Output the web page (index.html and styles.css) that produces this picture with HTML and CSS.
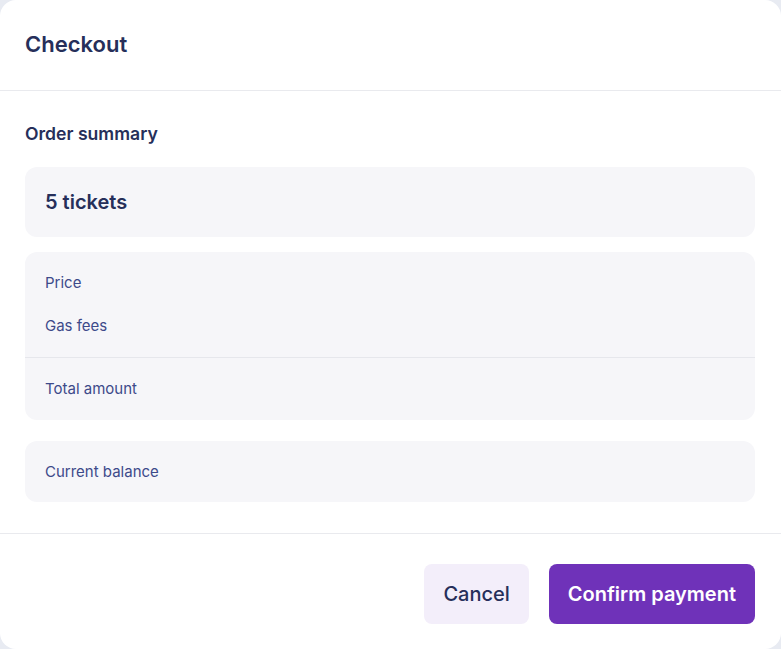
FILE: index.html
```html
<!DOCTYPE html>
<html lang="en">
<head>
    <meta charset="UTF-8">
    <meta name="viewport" content="width=device-width, initial-scale=1.0">
    <title>Checkout</title>
    <link rel="stylesheet" href="styles.css">
</head>
<body>
    <div class="modal">
        <div class="modal-header">
            <h2>Checkout</h2>
        </div>

        <div class="modal-body">
            <h3 class="section-title">Order summary</h3>

            <div class="summary-box tickets">5 tickets</div>

            <div class="summary-box costs">
                <div class="cost-group">
                    <div class="cost-row">Price</div>
                    <div class="cost-row">Gas fees</div>
                </div>
                <div class="cost-group total">
                    <div class="cost-row">Total amount</div>
                </div>
            </div>

            <div class="summary-box balance">
                <div class="cost-row">Current balance</div>
            </div>
        </div>

        <div class="modal-footer">
            <button type="button" class="btn btn-cancel">Cancel</button>
            <button type="button" class="btn btn-confirm">Confirm payment</button>
        </div>
    </div>
</body>
</html>
```

FILE: styles.css
```css
* {
    box-sizing: border-box;
}
body {
    margin: 0;
    font-family: 'Inter', 'Noto Sans', sans-serif;
    background-color: #e8ebf2;
    color: #262f5a;
}
.modal {
    background: #ffffff;
    border-radius: 16px;
    min-height: 100vh;
    display: flex;
    flex-direction: column;
}
.modal-header {
    height: 91px;
    padding: 0 25px 3px;
    display: flex;
    align-items: center;
    border-bottom: 1px solid #e9eaee;
}
.modal-header h2 {
    margin: 0;
    font-size: 22px;
    font-weight: 600;
}
.modal-body {
    padding: 31px 26px 31px 25px;
    border-bottom: 1px solid #e9eaee;
}
.section-title {
    margin: 0 0 21px;
    font-size: 17.6px;
    line-height: 24px;
    font-weight: 600;
}
.summary-box {
    background: #f6f6f9;
    border-radius: 12px;
}
.tickets {
    height: 70px;
    padding: 0 20px;
    display: flex;
    align-items: center;
    font-size: 20px;
    font-weight: 600;
    margin-bottom: 15px;
}
.costs {
    margin-bottom: 21px;
}
.cost-group {
    padding: 21px 20px 21px;
    display: flex;
    flex-direction: column;
    gap: 23px;
}
.cost-group.total {
    border-top: 1px solid #e6e7ec;
}
.cost-row {
    font-size: 15px;
    line-height: 20px;
    color: #3d4a8a;
}
.balance {
    padding: 21px 20px 20px;
}
.modal-footer {
    flex: 1;
    padding: 30px 26px 25px 25px;
    display: flex;
    justify-content: flex-end;
    align-items: flex-start;
    gap: 20px;
}
.btn {
    height: 60px;
    padding: 0 19px;
    border: none;
    border-radius: 8px;
    font-family: inherit;
    font-size: 20px;
    cursor: pointer;
}
.btn-cancel {
    background: #f3eefa;
    color: #262f5a;
    font-weight: 500;
}
.btn-confirm {
    background: #6f32b9;
    color: #ffffff;
    font-weight: 600;
}
.btn-confirm:hover {
    background: #5f28a3;
}
```
